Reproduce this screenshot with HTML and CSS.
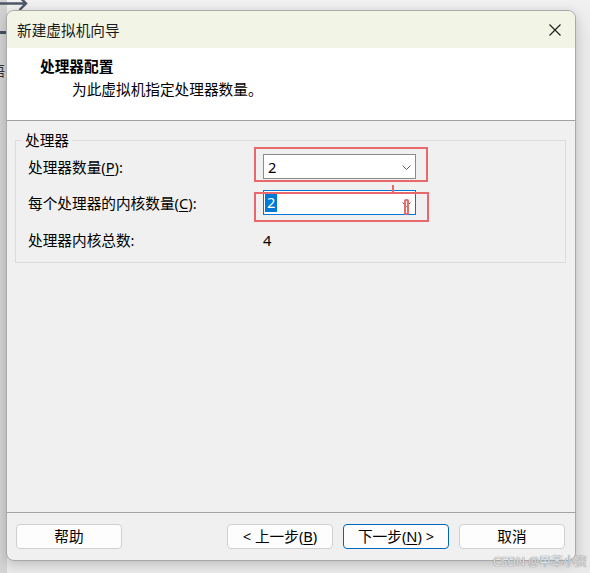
FILE: index.html
```html
<!DOCTYPE html>
<html lang="zh-CN">
<head>
<meta charset="utf-8">
<title>新建虚拟机向导</title>
<link rel="stylesheet" href="styles.css">
</head>
<body>
<div class="desktop">
  <div class="bg-strip"></div>
  <div class="bg-bar"></div>
  <span class="bg-glyph">语</span>
  <svg class="bg-arrow" width="30" height="12" viewBox="0 0 30 12"><path d="M-4 3.5H26M19.5 -3L26 3.5L19.5 10" fill="none" stroke="#4d5766" stroke-width="2.4"/></svg>

  <div class="window">
    <div class="titlebar">
      <span class="title">新建虚拟机向导</span>
      <svg class="close" width="12" height="12" viewBox="0 0 12 12"><path d="M0.5 0.5L11.5 11.5M11.5 0.5L0.5 11.5" stroke="#1b1b1b" stroke-width="1.1"/></svg>
    </div>
    <div class="header">
      <div class="h-title">处理器配置</div>
      <div class="h-sub">为此虚拟机指定处理器数量。</div>
    </div>
    <div class="content">
      <fieldset class="group">
        <legend>处理器</legend>
        <div class="grid">
          <label class="lbl">处理器数量(<u>P</u>):</label>
          <div class="combo"><span class="val">2</span><svg class="chev" width="9" height="5" viewBox="0 0 9 5"><path d="M0.5 0.5L4.5 4.5L8.5 0.5" fill="none" stroke="#5f5f5f" stroke-width="1"/></svg></div>
          <label class="lbl">每个处理器的内核数量(<u>C</u>):</label>
          <div class="combo focus"><span class="sel">2</span><svg class="chev" width="9" height="5" viewBox="0 0 9 5"><path d="M0.5 0.5L4.5 4.5L8.5 0.5" fill="none" stroke="#5f5f5f" stroke-width="1"/></svg></div>
          <span class="lbl last">处理器内核总数:</span>
          <span class="total last">4</span>
        </div>
      </fieldset>
    </div>
    <div class="footer">
      <button class="btn">帮助</button>
      <span class="spacer"></span>
      <button class="btn">&lt; 上一步(<u>B</u>)</button>
      <button class="btn primary">下一步(<u>N</u>) &gt;</button>
      <button class="btn">取消</button>
    </div>
  </div>

  <div class="mark box1"></div>
  <div class="mark box2"></div>
  <div class="mark tick"></div>
  <div class="mark pill"></div>
  <div class="watermark">CSDN @甲苯小资</div>
</div>
</body>
</html>
```

FILE: styles.css
```css
* { box-sizing: border-box; }
html, body { margin: 0; padding: 0; }
body {
  width: 590px;
  height: 573px;
  overflow: hidden;
  background: #e9e9e9;
  font-family: "Noto Sans", "Noto Sans CJK SC", sans-serif;
  font-size: 14.67px;
  color: #000;
}
.desktop {
  position: relative;
  width: 590px;
  height: 573px;
  padding: 10px 0 0 6px;
  background: linear-gradient(to bottom, #f1f1f1 0, #e9e9e9 40px);
}
.bg-strip {
  position: absolute;
  left: 0; top: 0;
  width: 7px; height: 573px;
  background: #d3d3d3;
}
.bg-bar {
  position: absolute;
  left: 0; top: 31px;
  width: 7px; height: 3px;
  background: #46505e;
}
.bg-glyph {
  position: absolute;
  left: -9px; top: 61px;
  font-size: 14px;
  line-height: 20px;
  color: #333;
}
.bg-arrow { position: absolute; left: 0; top: 0; }

.window {
  position: relative;
  z-index: 1;
  width: 570px;
  height: 551px;
  border: 1px solid #a9a9a9;
  border-radius: 8px;
  background: #f0f0f0;
  display: flex;
  flex-direction: column;
  overflow: hidden;
  box-shadow: 0 3px 12px rgba(0, 0, 0, 0.2);
}
.titlebar {
  flex: none;
  height: 37px;
  background: #f2f5e6;
  display: flex;
  align-items: center;
  justify-content: space-between;
  padding: 0 14px 0 10px;
}
.title { line-height: 20px; color: #1a1a1a; }
.close { display: block; }

.header {
  flex: none;
  height: 73px;
  background: #fff;
  border-bottom: 1px solid #a0a0a0;
  padding: 8px 0 0 33px;
  line-height: 20px;
}
.h-title { font-weight: bold; }
.h-sub { margin: 3px 0 0 32px; }

.content {
  flex: 1;
  padding: 9px 9px 0 8px;
}
.group {
  margin: 0;
  min-width: 0;
  border: 1px solid #dcdcdc;
  padding: 4px 0 11px 6px;
}
.group legend {
  padding: 0 3px;
  line-height: 20px;
}
.grid {
  display: grid;
  grid-template-columns: 235px 153px;
  grid-template-rows: 25px 25px 25px;
  row-gap: 11px;
  margin-left: 6px;
}
.lbl, .total {
  align-self: center;
  line-height: 20px;
}
.last { padding-top: 3px; }
.lbl u, .btn u { text-decoration-thickness: 1px; text-underline-offset: 2px; }
.combo {
  display: flex;
  align-items: center;
  justify-content: space-between;
  border: 1px solid #8b8b8b;
  background: #fff;
  padding: 0 4px 0 4px;
  line-height: 20px;
}
.combo.focus {
  border-color: #0078d4;
  padding-left: 1px;
}
.chev { display: block; margin-top: 1px; }
.combo.focus .chev { margin-top: 4px; }
.sel {
  background: #0078d7;
  color: #fff;
  line-height: 19px;
  padding: 0 2px;
}

.footer {
  flex: none;
  height: 48px;
  border-top: 1px solid #a3a3a3;
  padding: 11px 10px 0 9px;
  display: flex;
  gap: 10px;
}
.spacer { flex: 1; }
.btn {
  width: 106px;
  height: 25px;
  padding: 0;
  border: 1px solid #d0d0d0;
  border-radius: 4px;
  background: #fdfdfd;
  font: inherit;
  line-height: 23px;
  color: #000;
}
.btn.primary { border-color: #0067c0; }

.mark {
  position: absolute;
  z-index: 2;
  border: 2px solid #e8686c;
}
.box1 { left: 254px; top: 147px; width: 174px; height: 35px; }
.box2 { left: 254px; top: 192px; width: 175px; height: 30px; }
.tick { left: 392px; top: 185px; width: 2px; height: 8px; border-width: 0 0 0 2px; }
.pill { left: 404px; top: 199px; width: 5px; height: 16px; border-radius: 2px; }

.watermark {
  position: absolute;
  z-index: 3;
  right: 3px;
  bottom: 4px;
  font-size: 12px;
  line-height: 14px;
  color: #e4e4e4;
  text-shadow: 0 0 1px #8a8a8a, 0 0 1px #8a8a8a;
}
```
